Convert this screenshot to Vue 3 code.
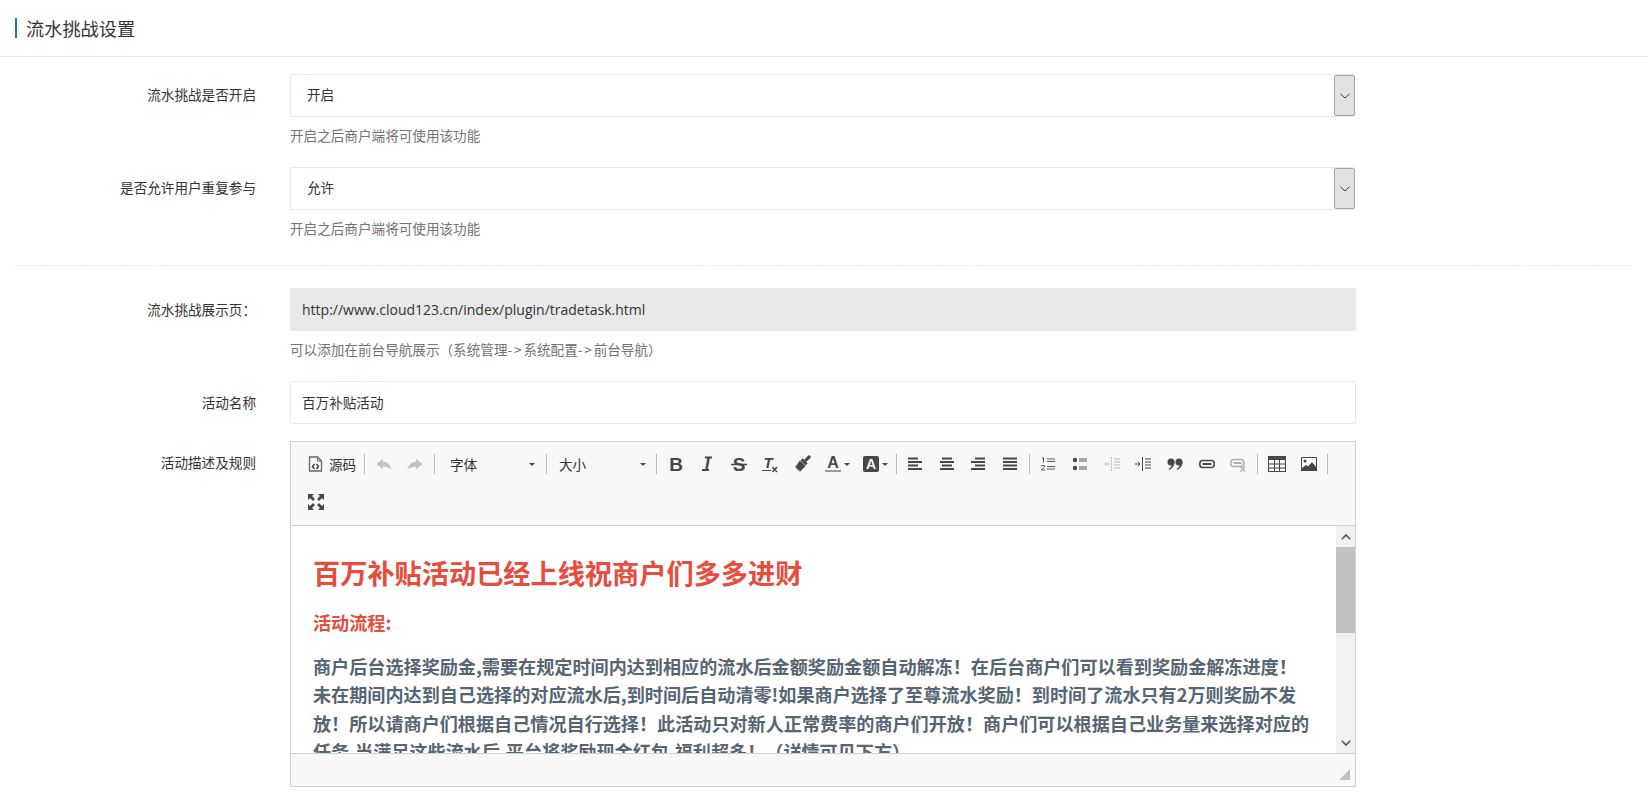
<script setup>
const paragraphs = [
  '商户后台选择奖励金,需要在规定时间内达到相应的流水后金额奖励金额自动解冻！在后台商户们可以看到奖励金解冻进度！',
  '未在期间内达到自己选择的对应流水后,到时间后自动清零!如果商户选择了至尊流水奖励！到时间了流水只有2万则奖励不发',
  '放！所以请商户们根据自己情况自行选择！此活动只对新人正常费率的商户们开放！商户们可以根据自己业务量来选择对应的',
  '任务,当满足这些流水后,平台将奖励现金红包,福利超多！（详情可见下方）'
]
</script>

<template>
  <div class="page">
    <header class="head"><span class="head-title">流水挑战设置</span></header>

    <section class="form">
      <div class="row sel-row">
        <label class="lbl">流水挑战是否开启</label>
        <div class="ctl">
          <div class="sel"><span class="val">开启</span><span class="sel-btn"><svg width="10" height="6" viewBox="0 0 10 6"><path d="M.5.8 5 5 9.5.8" fill="none" stroke="#444" stroke-width="1"/></svg></span></div>
          <p class="help">开启之后商户端将可使用该功能</p>
        </div>
      </div>
      <div class="row sel-row">
        <label class="lbl">是否允许用户重复参与</label>
        <div class="ctl">
          <div class="sel"><span class="val">允许</span><span class="sel-btn"><svg width="10" height="6" viewBox="0 0 10 6"><path d="M.5.8 5 5 9.5.8" fill="none" stroke="#444" stroke-width="1"/></svg></span></div>
          <p class="help">开启之后商户端将可使用该功能</p>
        </div>
      </div>

      <div class="dash"></div>

      <div class="row">
        <label class="lbl">流水挑战展示页：</label>
        <div class="ctl">
          <div class="inp ro">http://www.cloud123.cn/index/plugin/tradetask.html</div>
          <p class="help">可以添加在前台导航展示（系统管理<span class="arrow">-&gt;</span>系统配置<span class="arrow">-&gt;</span>前台导航）</p>
        </div>
      </div>
      <div class="row">
        <label class="lbl">活动名称</label>
        <div class="ctl"><div class="inp">百万补贴活动</div></div>
      </div>
      <div class="row editor-row">
        <label class="lbl">活动描述及规则</label>
        <div class="ctl">
          <div class="editor">
            <div class="toolbar">
              <div class="tb-row">
                <span class="src">
                  <svg class="ic" viewBox="0 0 14 16"><path d="M1 1h8l4 4v10H1z" fill="#f8f8f8" stroke="#666" stroke-width="1.3"/><path d="M9 1v4h4" fill="none" stroke="#666"/><path d="M6 8 4 10.5 6 13M8 8l2 2.5L8 13" fill="none" stroke="#333" stroke-width="1.3"/></svg>
                  <span>源码</span>
                </span>
                <i class="sep"></i>
                <span class="btn"><svg class="ic" viewBox="0 0 16 16"><path d="M7 2.500.5 8 7 13.500v-3c3 0 6 1 8.500 3-1-4.500-4-7.500-8.500-8z" fill="#c4c4c4"/></svg></span>
                <span class="btn"><svg class="ic" viewBox="0 0 16 16"><path d="M9 2.500 15.500 8 9 13.500v-3c-3 0-6 1-8.500 3 1-4.500 4-7.500 8.500-8z" fill="#c4c4c4"/></svg></span>
                <i class="sep"></i>
                <span class="combo font"><span>字体</span><b class="caret"></b></span>
                <i class="sep"></i>
                <span class="combo size"><span>大小</span><b class="caret"></b></span>
                <i class="sep"></i>
                <span class="btn"><svg class="ic" viewBox="0 0 16 16"><text x="8" y="14.500" text-anchor="middle" class="gl" font-weight="700" font-size="19">B</text></svg></span>
                <span class="btn"><svg class="ic" viewBox="0 0 16 16"><text x="8" y="14" text-anchor="middle" class="gl" font-weight="700" font-style="italic" font-size="17">I</text><path d="M6 1.500h7M3 14h7" stroke="#474747" stroke-width="2"/></svg></span>
                <span class="btn"><svg class="ic" viewBox="0 0 16 16"><text x="8" y="14.500" text-anchor="middle" class="gl" font-weight="700" font-size="19">S</text><path d="M0 8.500h16" stroke="#474747" stroke-width="1.500"/></svg></span>
                <span class="btn"><svg class="ic" viewBox="0 0 16 16"><text x="6" y="12" text-anchor="middle" class="gl" font-weight="700" font-style="italic" font-size="15">T</text><path d="M0 14.500h9" stroke="#474747" stroke-width="1"/><path d="m10.500 11 4.500 5m0-5-4.500 5" stroke="#474747" stroke-width="1.500"/></svg></span>
                <span class="btn"><svg class="ic" viewBox="0 0 16 16"><g transform="rotate(45 8 8)" fill="#474747"><rect x="6.500" y="-3.500" width="3" height="7" rx="1"/><rect x="4.500" y="3.500" width="7" height="3"/><path d="M4 7h8v8.500l-1.500-1.500-1 2-1-2-1 2-1-2-1 1.500z"/></g></svg></span>
                <span class="btn wide-a"><svg class="ic" viewBox="0 0 16 16"><text x="8" y="12" text-anchor="middle" class="gl" font-weight="700" font-size="16">A</text><rect x="0" y="14" width="16" height="2" fill="#999"/></svg><b class="caret sm"></b></span>
                <span class="btn wide-b"><svg class="ic" viewBox="0 0 16 16"><rect x="0" y="0" width="16" height="16" rx="2" fill="#474747"/><text x="8" y="13" text-anchor="middle" fill="#f8f8f8" font-family="'Liberation Sans',sans-serif" font-weight="700" font-size="14">A</text></svg><b class="caret sm"></b></span>
                <i class="sep"></i>
                <span class="btn w32"><svg class="ic" viewBox="0 0 16 16"><path d="M1 2.500h10M1 6h14M1 9.500h10M1 13h14" stroke="#474747" stroke-width="2"/></svg></span>
                <span class="btn w32"><svg class="ic" viewBox="0 0 16 16"><path d="M3 2.500h10M1 6h14M3 9.500h10M1 13h14" stroke="#474747" stroke-width="2"/></svg></span>
                <span class="btn w32"><svg class="ic" viewBox="0 0 16 16"><path d="M5 2.500h10M1 6h14M5 9.500h10M1 13h14" stroke="#474747" stroke-width="2"/></svg></span>
                <span class="btn w32"><svg class="ic" viewBox="0 0 16 16"><path d="M1 2.500h14M1 6h14M1 9.500h14M1 13h14" stroke="#474747" stroke-width="2"/></svg></span>
                <i class="sep"></i>
                <span class="btn w316"><svg class="ic" viewBox="0 0 16 16"><path d="M7 3h8M7 5.500h8M7 10.500h8M7 13h8" stroke="#555" stroke-width="1"/><path d="M2 2.500 3.500 1.500v5M1.500 9.500H4.500V11L1.500 13.500v.5H5" fill="none" stroke="#555" stroke-width="1"/></svg></span>
                <span class="btn w316"><svg class="ic" viewBox="0 0 16 16"><circle cx="3" cy="4" r="2.200" fill="#474747"/><circle cx="3" cy="12" r="2.200" fill="#474747"/><path d="M7 3h8M7 5h8M7 11h8M7 13h8" stroke="#555" stroke-width="1"/></svg></span>
                <span class="btn w316"><svg class="ic" viewBox="0 0 16 16" opacity=".35"><path d="M10 3h6M10 6h6M10 9h6M10 12h6M1 8h5M1 8l2-2M1 8l2 2" stroke="#474747" stroke-width="1" fill="none"/><path d="M7.500 1v14" stroke="#474747" stroke-dasharray="2 1"/></svg></span>
                <span class="btn w316"><svg class="ic" viewBox="0 0 16 16"><path d="M10 3h6M10 6h6M10 9h6M10 12h6M0 8h5M5 8 3 6M5 8l-2 2M7.500 1v14" stroke="#474747" stroke-width="1" fill="none"/></svg></span>
                <span class="btn w316"><svg class="ic" viewBox="0 0 16 16"><circle cx="4" cy="6" r="3.500" fill="#474747"/><path d="M7.500 6C7.500 10 5 13 2 14l-.5-1C3.500 12 5 10 5 8z" fill="#474747"/><circle cx="12" cy="6" r="3.500" fill="#474747"/><path d="M15.500 6c0 4-2.500 7-5.500 8l-.5-1c2-1 3.500-3 3.500-5z" fill="#474747"/></svg></span>
                <span class="btn w316"><svg class="ic" viewBox="0 0 16 16"><rect x=".8" y="4.500" width="14.400" height="7" rx="3" fill="none" stroke="#474747" stroke-width="1.600"/><path d="M3.500 7h9v2h-9z" fill="#474747"/></svg></span>
                <span class="btn w316"><svg class="ic" viewBox="0 0 16 16" opacity=".4"><rect x=".8" y="3.500" width="13" height="7" rx="3" fill="none" stroke="#474747" stroke-width="1.600"/><path d="M3.500 6h8v2h-8z" fill="#474747"/><path d="m10.500 10.500 4.500 5m0-5-4.500 5" stroke="#474747" stroke-width="1.500"/></svg></span>
                <i class="sep"></i>
                <span class="btn w315"><svg class="ic tbl" viewBox="0 0 18 16"><rect x=".5" y=".5" width="17" height="15" fill="none" stroke="#474747"/><rect width="18" height="4" fill="#474747"/><path d="M6.500 4v12M11.500 4v12M0 8h18M0 12h18" stroke="#474747"/></svg></span>
                <span class="btn w315"><svg class="ic" viewBox="0 0 16 16"><rect x=".5" y="1.500" width="15" height="13" fill="#fff" stroke="#474747"/><circle cx="4" cy="5" r="1.500" fill="#474747"/><path d="M1 14v-2l4-3 2 1.500L11 6l4 5v3z" fill="#474747"/></svg></span>
                <i class="sep"></i>
              </div>
              <div class="tb-row">
                <span class="btn full"><svg class="ic" viewBox="0 0 16 16"><path d="M0 0h6L4 2l3 3-2 2-3-3-2 2zM16 0v6l-2-2-3 3-2-2 3-3-2-2zM0 16v-6l2 2 3-3 2 2-3 3 2 2zM16 16h-6l2-2-3-3 2-2 3 3 2-2z" fill="#474747"/></svg></span>
              </div>
            </div>
            <div class="body">
              <div class="content">
                <h1 class="big">百万补贴活动已经上线祝商户们多多进财</h1>
                <p class="sub">活动流程:</p>
                <p class="txt"><template v-for="p in paragraphs" :key="p">{{ p }}<br></template></p>
              </div>
              <div class="sbar">
                <span class="arr"><svg width="10" height="6" viewBox="0 0 10 6"><path d="M.8 5.200 5 1l4.200 4.200" fill="none" stroke="#505050" stroke-width="1.500"/></svg></span>
                <div class="track"><div class="thumb"></div></div>
                <span class="arr"><svg width="10" height="6" viewBox="0 0 10 6"><path d="M.8.8 5 5 9.200.8" fill="none" stroke="#505050" stroke-width="1.500"/></svg></span>
              </div>
            </div>
            <div class="foot"><svg class="grip" width="11" height="11" viewBox="0 0 11 11"><path d="M11 0v11H0z" fill="#bfbfbf"/></svg></div>
          </div>
        </div>
      </div>
    </section>
  </div>
</template>

<style scoped>
.page { width: 1648px; height: 798px; overflow: hidden; background: #fff; color: #333; font-family: "Noto Sans CJK SC", "Liberation Sans", sans-serif; font-size: 13.6px; }
.head { height: 57px; box-sizing: border-box; border-bottom: 1px solid #e9e9e9; padding: 18px 0 0 15px; }
.head-title { display: block; height: 20px; line-height: 20px; border-left: 2px solid #1a73d8; padding-left: 9px; font-size: 18.2px; color: #333; }
.form { padding-top: 17px; }
.row { display: flex; }
.lbl { width: 256px; flex: none; text-align: right; line-height: 43px; color: #333; }
.sel-row .lbl { line-height: 41px; }
.ctl { margin-left: 34px; width: 1066px; }
.sel, .inp { height: 43px; box-sizing: border-box; border: 1px solid #e8e8e8; border-radius: 2px; line-height: 41px; padding-left: 16px; display: flex; justify-content: space-between; background: #fff; }
.sel { width: 1065px; border-right: 0; line-height: 39px; }
.inp { padding-left: 11px; }
.ro { background: #e9e9e9; font-family: "Open Sans", "Liberation Sans", sans-serif; font-size: 14px; }
.sel-btn { width: 21px; height: 41px; box-sizing: border-box; border: 1px solid #a6a6a6; border-radius: 2px; background: #e1e1e1; display: flex; align-items: center; justify-content: center; }
.help { margin: 0; height: 50px; padding-top: 8px; box-sizing: border-box; line-height: 20px; color: #737373; }
.arrow { letter-spacing: 1.8px; }
.dash { height: 0; margin: 5px 18px 22px 15px; border-top: 1px dashed #e9e9e9; }
.editor-row { margin-top: 17px; }
.editor { height: 346px; box-sizing: border-box; border: 1px solid #d1d1d1; display: flex; flex-direction: column; }
.toolbar { height: 84px; flex: none; box-sizing: border-box; padding-top: 3px; background: #f8f8f8; border-bottom: 1px solid #d1d1d1; }
.tb-row { height: 38px; display: flex; align-items: center; padding-left: 10px; }
.ic { width: 16px; height: 16px; display: block; flex: none; overflow: visible; }
.tbl { width: 18px; }
.gl { font-family: "Liberation Sans", sans-serif; fill: #474747; }
.sep { width: 1px; height: 20px; background: #bcbcbc; flex: none; margin: 0 3px; }
.src { width: 63px; flex: none; box-sizing: border-box; padding-left: 7px; display: flex; align-items: center; gap: 6px; margin-right: -3px; }
.src .ic { width: 15px; height: 16px; }
.btn { width: 31.5px; flex: none; display: flex; align-items: center; justify-content: center; height: 24px; }
.w32.btn { width: 31.5px; }
.w316.btn { width: 31.7px; }
.w315.btn { width: 31.5px; }
.btn.wide-a { width: 37px; justify-content: flex-start; padding-left: 7px; box-sizing: border-box; gap: 3px; }
.btn.wide-b { width: 38px; justify-content: flex-start; padding-left: 8px; box-sizing: border-box; gap: 3px; }
.btn.full { width: 16px; margin-left: 7px; }
.combo { flex: none; display: flex; align-items: center; justify-content: space-between; box-sizing: border-box; margin: 0 -3px; }
.combo.font { width: 111px; padding: 0 11px 0 15px; }
.combo.size { width: 109px; padding: 0 10px 0 12px; }
.caret { width: 0; height: 0; border: 3px solid transparent; border-top: 3px solid #474747; border-bottom: 0; flex: none; }
.body { flex: 1; min-height: 0; position: relative; overflow: hidden; background: #fff; }
.content { padding: 0 0 0 22px; width: 1030px; font-weight: 700; }
.big { margin: 0; padding-top: 27px; font-size: 27.2px; line-height: 38px; color: #e74c3c; font-weight: 700; }
.sub { margin: 16px 0 0; font-size: 18.13px; line-height: 30px; color: #e74c3c; }
.txt { margin: 15px 0 0; font-size: 18.13px; line-height: 28.4px; color: #566573; white-space: nowrap; }
.sbar { position: absolute; right: 0; top: 0; bottom: 0; width: 19px; background: #f1f1f1; display: flex; flex-direction: column; }
.arr { height: 21px; display: flex; align-items: center; justify-content: center; flex: none; }
.track { flex: 1; }
.thumb { height: 86px; background: #c1c1c1; }
.foot { height: 33px; flex: none; box-sizing: border-box; border-top: 1px solid #d1d1d1; background: #f8f8f8; position: relative; }
.grip { position: absolute; right: 5px; bottom: 6px; }
</style>

<style>
html, body { margin: 0; background: #fff; }
</style>
